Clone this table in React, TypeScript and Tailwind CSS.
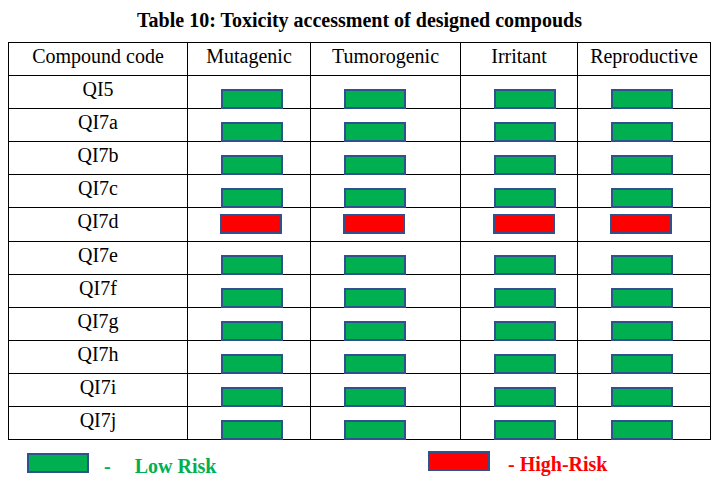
import React from 'react';

type Risk = 'low' | 'high';

interface Row {
  code: string;
  risks: Risk[];
}

const headers = ['Compound code', 'Mutagenic', 'Tumorogenic', 'Irritant', 'Reproductive'];

const low: Risk[] = ['low', 'low', 'low', 'low'];
const rows: Row[] = [
  { code: 'QI5', risks: low },
  { code: 'QI7a', risks: low },
  { code: 'QI7b', risks: low },
  { code: 'QI7c', risks: low },
  { code: 'QI7d', risks: ['high', 'high', 'high', 'high'] },
  { code: 'QI7e', risks: low },
  { code: 'QI7f', risks: low },
  { code: 'QI7g', risks: low },
  { code: 'QI7h', risks: low },
  { code: 'QI7i', risks: low },
  { code: 'QI7j', risks: low },
];

/** 표의 녹색/적색 박스 — Word 도형 느낌 그대로 (진청 테두리) */
const RiskBox: React.FC<{ risk: Risk; className?: string }> = ({ risk, className = '' }) => (
  <span
    className={`block h-[20px] w-[62px] border-2 border-[#2f528f] ${
      risk === 'high' ? 'bg-[#ff0000]' : 'bg-[#00b050]'
    } ${className}`}
  />
);

const serif = { fontFamily: '"Liberation Serif", "Times New Roman", serif' };

export default function App() {
  return (
    <div className="h-[495px] w-[719px] bg-white text-black" style={serif}>
      <h1 className="pt-[9px] text-center text-[20px] font-bold leading-[23px]">
        Table 10: Toxicity accessment of designed compouds
      </h1>

      {/* table */}
      <div className="ml-[8px] mt-[10px] grid w-[703px] grid-cols-[179px_123px_150px_117px_133px] border-l border-t border-black">
        {headers.map((h) => (
          <div
            key={h}
            className="h-[33px] border-b border-r border-black pt-[2px] text-center text-[20px] leading-[23px]"
          >
            {h}
          </div>
        ))}

        {rows.map((r) => {
          const high = r.risks[0] === 'high';
          return (
            <React.Fragment key={r.code}>
              <div
                className={`${high ? 'h-[34px]' : 'h-[33px]'} border-b border-r border-black pt-[2px] text-center text-[20px] leading-[23px]`}
              >
                {r.code}
              </div>
              {r.risks.map((risk, i) => (
                <div
                  key={i}
                  className={`flex ${high ? 'h-[34px] items-start pt-[6px] pl-[32px]' : 'h-[33px] items-end pl-[33px]'} border-b border-r border-black`}
                >
                  <RiskBox risk={risk} className={high ? '' : 'relative mb-[-1px]'} />
                </div>
              ))}
            </React.Fragment>
          );
        })}
      </div>

      {/* legend */}
      <div className="flex items-start pl-[27px] text-[20px] font-bold leading-[23px]">
        <div className="flex w-[401px] items-start">
          <RiskBox risk="low" className="mt-[13px]" />
          <span className="ml-[15px] mt-[15px] text-[#00b050]">-</span>
          <span className="ml-[24px] mt-[15px] text-[#00b050]">Low Risk</span>
        </div>
        <div className="flex items-start">
          <RiskBox risk="high" className="mt-[11px]" />
          <span className="ml-[18px] mt-[13px] text-[#ff0000]">- High-Risk</span>
        </div>
      </div>
    </div>
  );
}
